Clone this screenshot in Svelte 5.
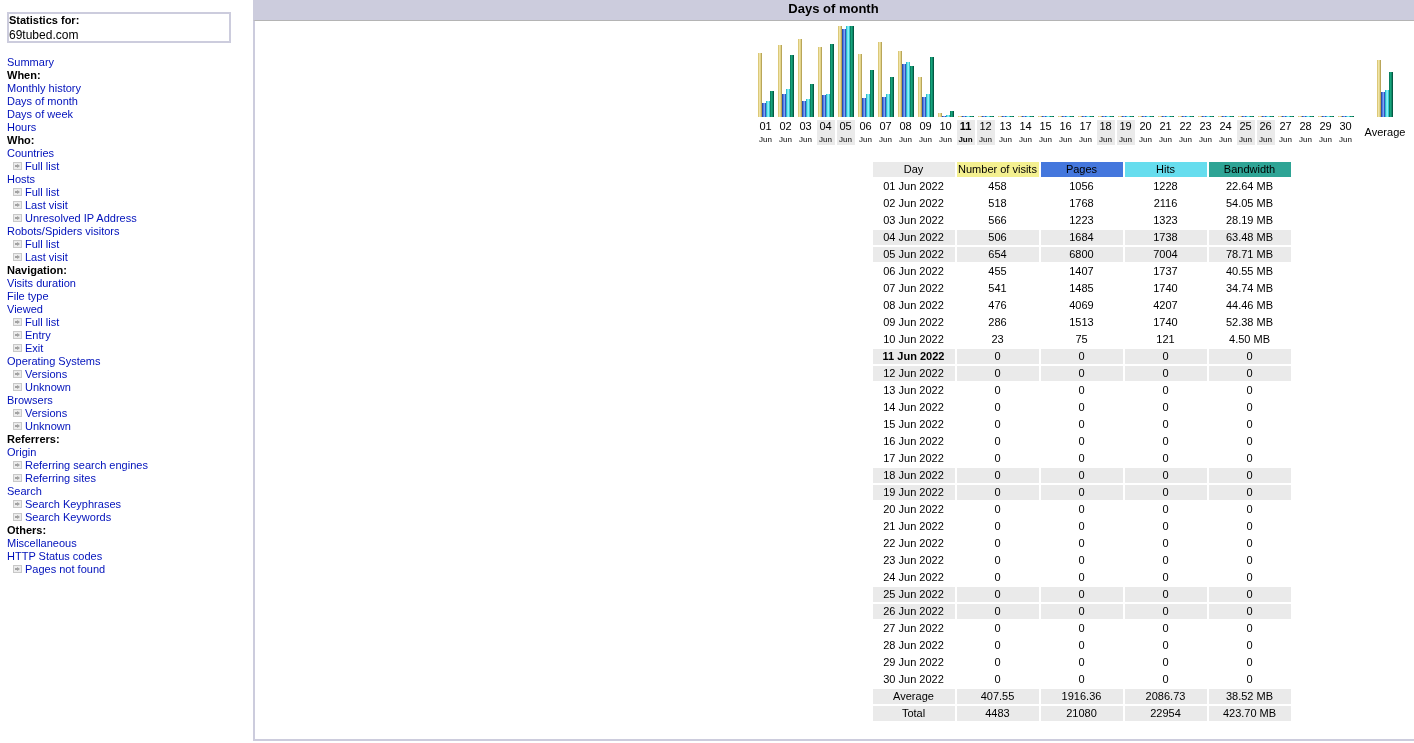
<script lang="ts">
  const menu = [
    { t: "Summary" },
    { t: "When:", h: true },
    { t: "Monthly history" },
    { t: "Days of month" },
    { t: "Days of week" },
    { t: "Hours" },
    { t: "Who:", h: true },
    { t: "Countries" },
    { t: "Full list", sub: true },
    { t: "Hosts" },
    { t: "Full list", sub: true },
    { t: "Last visit", sub: true },
    { t: "Unresolved IP Address", sub: true },
    { t: "Robots/Spiders visitors" },
    { t: "Full list", sub: true },
    { t: "Last visit", sub: true },
    { t: "Navigation:", h: true },
    { t: "Visits duration" },
    { t: "File type" },
    { t: "Viewed" },
    { t: "Full list", sub: true },
    { t: "Entry", sub: true },
    { t: "Exit", sub: true },
    { t: "Operating Systems" },
    { t: "Versions", sub: true },
    { t: "Unknown", sub: true },
    { t: "Browsers" },
    { t: "Versions", sub: true },
    { t: "Unknown", sub: true },
    { t: "Referrers:", h: true },
    { t: "Origin" },
    { t: "Referring search engines", sub: true },
    { t: "Referring sites", sub: true },
    { t: "Search" },
    { t: "Search Keyphrases", sub: true },
    { t: "Search Keywords", sub: true },
    { t: "Others:", h: true },
    { t: "Miscellaneous" },
    { t: "HTTP Status codes" },
    { t: "Pages not found", sub: true },
  ]

  const filled = [
    ["458", "1056", "1228", "22.64 MB", [64, 14, 16, 26]],
    ["518", "1768", "2116", "54.05 MB", [72, 23, 28, 62]],
    ["566", "1223", "1323", "28.19 MB", [78, 16, 18, 33]],
    ["506", "1684", "1738", "63.48 MB", [70, 22, 23, 73]],
    ["654", "6800", "7004", "78.71 MB", [91, 88, 91, 91]],
    ["455", "1407", "1737", "40.55 MB", [63, 19, 23, 47]],
    ["541", "1485", "1740", "34.74 MB", [75, 20, 23, 40]],
    ["476", "4069", "4207", "44.46 MB", [66, 53, 55, 51]],
    ["286", "1513", "1740", "52.38 MB", [40, 20, 23, 60]],
    ["23", "75", "121", "4.50 MB", [4, 1, 2, 6]],
  ] as [string, string, string, string, number[]][]

  const weekend = [4, 5, 11, 12, 18, 19, 25, 26]

  const days = Array.from({ length: 30 }, (_, i) => {
    const n = i + 1
    const label = String(n).padStart(2, "0")
    const row = filled[i] ?? ["0", "0", "0", "0", [1, 1, 1, 1]]
    return {
      label,
      date: `${label} Jun 2022`,
      cells: row.slice(0, 4) as string[],
      bars: row[4] as number[],
      shaded: weekend.includes(n),
      today: n === 11,
    }
  })

  const kinds = ["v", "p", "h", "k"]
</script>

<div class="page">
  <aside class="side">
    <div class="stats">
      <b>Statistics for:</b>
      <span>69tubed.com</span>
    </div>
    <nav class="menu">
      {#each menu as item}
        {#if item.h}
          <b class="line">{item.t}</b>
        {:else if item.sub}
          <a class="line sub" href="#top">
            <svg width="9" height="8" viewBox="0 0 9 8">
              <rect x="0.5" y="0.5" width="8" height="7" fill="#ececec" stroke="#c8c8c8" />
              <path d="M2 3h2V2l3 2-3 2V5H2z" fill="#a2a2a2" />
            </svg>
            <span>{item.t}</span>
          </a>
        {:else}
          <a class="line" href="#top">{item.t}</a>
        {/if}
      {/each}
    </nav>
  </aside>

  <main class="main">
    <div class="title">Days of month</div>
    <div class="panel">
      <div class="chart">
        {#each days as d}
          <div class="col">
            <div class="bars">
              {#each d.bars as h, i}
                <i class="bar {kinds[i]}" style="height:{h}px"></i>
              {/each}
            </div>
            <div class="label" class:shaded={d.shaded} class:today={d.today}>
              {d.label}<small>Jun</small>
            </div>
          </div>
        {/each}
        <div class="col avg">
          <div class="bars">
            {#each [57, 25, 27, 45] as h, i}
              <i class="bar {kinds[i]}" style="height:{h}px"></i>
            {/each}
          </div>
          <div class="label">Average</div>
        </div>
      </div>

      <table class="data">
        <thead>
          <tr>
            <th class="grey">Day</th>
            <th class="cv">Number of visits</th>
            <th class="cp">Pages</th>
            <th class="ch">Hits</th>
            <th class="ck">Bandwidth</th>
          </tr>
        </thead>
        <tbody>
          {#each days as d}
            <tr class:grey={d.shaded} class:today={d.today}>
              <td>{d.date}</td>
              {#each d.cells as c}
                <td>{c}</td>
              {/each}
            </tr>
          {/each}
          <tr class="grey">
            <td>Average</td><td>407.55</td><td>1916.36</td><td>2086.73</td><td>38.52 MB</td>
          </tr>
          <tr class="grey">
            <td>Total</td><td>4483</td><td>21080</td><td>22954</td><td>423.70 MB</td>
          </tr>
        </tbody>
      </table>
    </div>
  </main>
</div>

<style>
  :global(body) {
    background: #fff;
    overflow: hidden;
  }
  .page {
    display: flex;
    width: 1414px;
    height: 743px;
    overflow: hidden;
    font-family: "Liberation Sans", Arial, sans-serif;
    font-size: 11px;
    color: #000;
    will-change: transform;
  }
  .side {
    flex: none;
    width: 253px;
    box-sizing: border-box;
    padding: 12px 0 0 7px;
  }
  .stats {
    display: flex;
    flex-direction: column;
    box-sizing: border-box;
    width: 224px;
    height: 31px;
    border: 2px solid #ccd;
    line-height: 13px;
  }
  .stats span {
    font-size: 12px;
    line-height: 14px;
    padding-top: 1px;
  }
  .menu {
    display: flex;
    flex-direction: column;
    margin-top: 13px;
  }
  .line {
    display: flex;
    align-items: center;
    height: 13px;
    line-height: 13px;
    white-space: nowrap;
  }
  a {
    color: #0011bb;
    text-decoration: none;
  }
  .sub {
    padding-left: 6px;
    gap: 3px;
  }
  .sub svg {
    margin-top: -1px;
  }
  .main {
    flex: none;
    width: 1161px;
    height: 741px;
    display: flex;
    flex-direction: column;
  }
  .title {
    flex: none;
    height: 20px;
    background: #ccd;
    text-align: center;
    font-size: 13px;
    font-weight: bold;
    line-height: 18px;
  }
  .panel {
    flex: 1;
    width: 1654px;
    display: flex;
    flex-direction: column;
    align-items: center;
    border-left: 2px solid #ccd;
    border-bottom: 2px solid #ccd;
    border-top: 1px solid #b4b4b4;
    padding-top: 5px;
  }
  .chart {
    display: flex;
    gap: 2px;
    width: 650px;
  }
  .col {
    flex: none;
    width: 18px;
    display: flex;
    flex-direction: column;
  }
  .col.avg {
    width: 44px;
    margin-left: 6px;
  }
  .bars {
    height: 91px;
    display: flex;
    align-items: flex-end;
    justify-content: center;
  }
  .bar {
    display: block;
    width: 4px;
  }
  .bar.v {
    background: linear-gradient(90deg, #dcc878 25%, #efe3a6 25% 50%, #e2d48a 50% 75%, #b9a65a 75%);
  }
  .bar.p {
    background: linear-gradient(90deg, #2a4cb0 25%, #4f7fe6 25% 50%, #7ea2f2 50% 75%, #2f55bd 75%);
  }
  .bar.h {
    background: linear-gradient(90deg, #2cbccb 25%, #6fe6ef 25% 50%, #8eeef2 50% 75%, #35c6d6 75%);
  }
  .bar.k {
    background: linear-gradient(90deg, #0b7f5f 25%, #16a57c 25% 50%, #0f8a69 50% 75%, #055a44 75%);
  }
  .label {
    margin-top: 3px;
    height: 25px;
    box-sizing: border-box;
    padding-right: 1px;
    text-align: center;
    line-height: 13px;
  }
  .avg .label {
    line-height: 25px;
    padding-right: 0;
  }
  .label small {
    display: block;
    margin-top: 2px;
    font-size: 8px;
    line-height: 10px;
  }
  .label.shaded {
    background: #eaeaea;
  }
  .label.today {
    background: #eaeaea;
    font-weight: bold;
  }
  .data {
    margin-top: 15px;
    border-collapse: separate;
    border-spacing: 2px;
    table-layout: fixed;
    font-size: 11px;
  }
  th,
  td {
    box-sizing: border-box;
    width: 82px;
    height: 15px;
    padding: 0 1px 0 0;
    text-align: center;
    font-weight: normal;
    line-height: 13px;
    white-space: nowrap;
  }
  .grey,
  .grey td,
  .today td {
    background: #eaeaea;
  }
  .today td:first-child {
    font-weight: bold;
  }
  .cv {
    background: #f4f090;
  }
  .cp {
    background: #4477dd;
  }
  .ch {
    background: #66ddee;
  }
  .ck {
    background: #2ea495;
  }
</style>
